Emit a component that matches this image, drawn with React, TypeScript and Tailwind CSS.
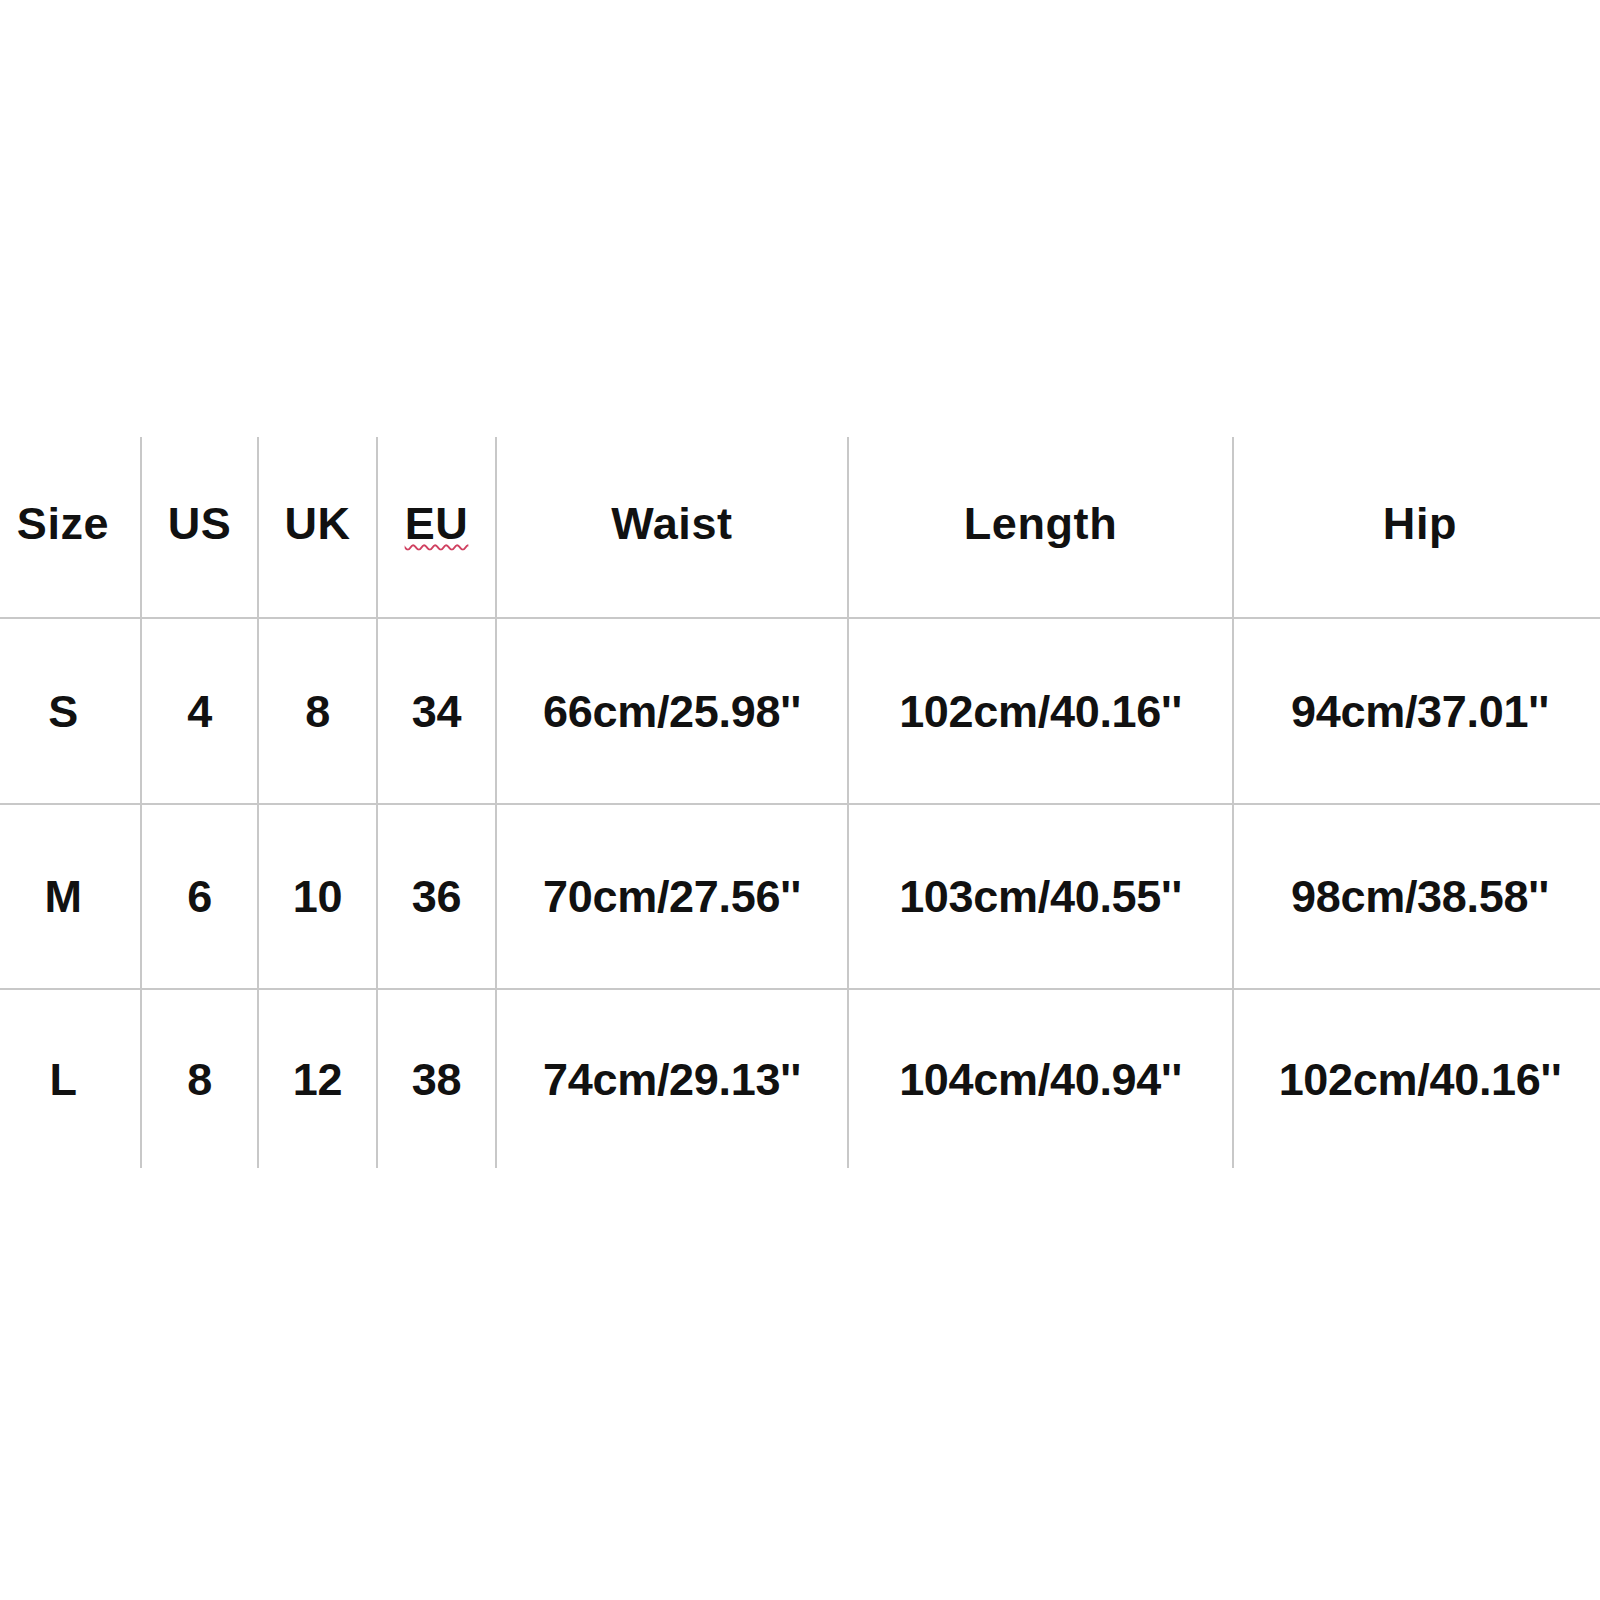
import React from "react";

const headers = ["Size", "US", "UK", "EU", "Waist", "Length", "Hip"];

const rows = [
  ["S", "4", "8", "34", "66cm/25.98''", "102cm/40.16''", "94cm/37.01''"],
  ["M", "6", "10", "36", "70cm/27.56''", "103cm/40.55''", "98cm/38.58''"],
  ["L", "8", "12", "38", "74cm/29.13''", "104cm/40.94''", "102cm/40.16''"],
];

const rowHeights = ["h-[180px]", "h-[186px]", "h-[185px]", "h-[180px]"];

const App = () => {
  return (
    <div
      className="w-[1600px] h-[1600px] bg-white text-[#111] pt-[437px]"
      style={{ fontFamily: '"Liberation Sans", Arial, sans-serif' }}
    >
      <div className="grid grid-cols-[140px_117px_119px_119px_352px_385px_368px]">
        {[headers, ...rows].map((row, r) =>
          row.map((cell, c) => (
            <div
              key={`${r}-${c}`}
              className={`flex items-center justify-center font-bold text-[45px] leading-none ${rowHeights[r]} ${
                c > 0 ? "border-l-2 border-l-[#c8c8c8]" : "pr-[14px]"
              } ${r > 0 ? "border-t-2 border-t-[#c8c8c8] tracking-[-0.3px]" : "pb-[8px] tracking-[0.6px]"} ${
                r > 0 && c === 0 ? "pr-[14px]" : ""
              } ${c === 6 ? "pl-[6px]" : ""}`}
            >
              {r === 0 && cell === "EU" ? (
                <span className="underline decoration-wavy decoration-[#d04060] decoration-2 underline-offset-[5px]">
                  {cell}
                </span>
              ) : (
                cell
              )}
            </div>
          ))
        )}
      </div>
    </div>
  );
};

export default App;
